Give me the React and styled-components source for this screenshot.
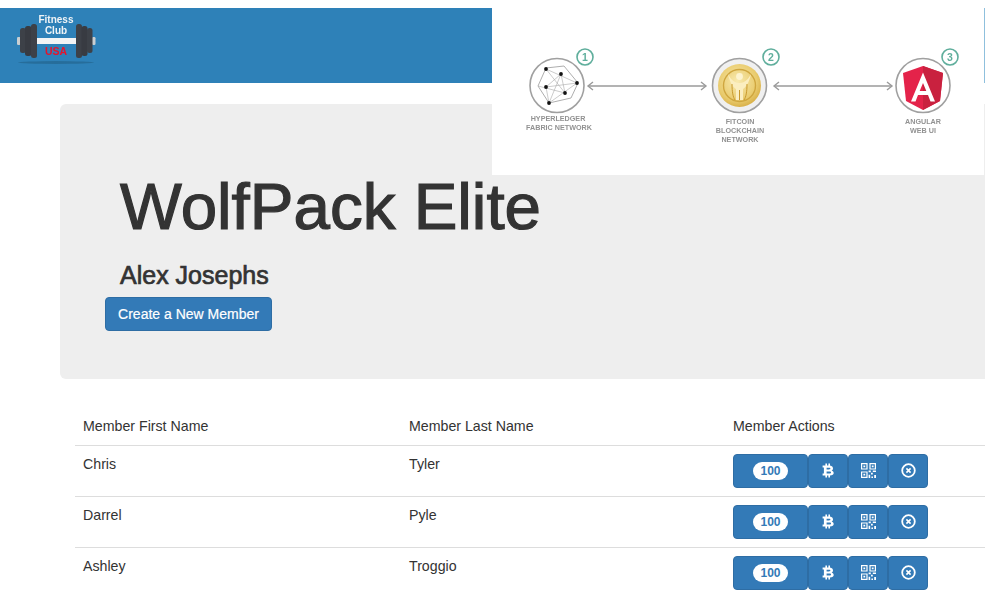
import React from "react";
import styled, { createGlobalStyle } from "styled-components";

const GlobalStyle = createGlobalStyle`
  html, body {
    margin: 0;
    padding: 0;
    background: #fff;
    overflow: hidden;
  }
  body {
    font-family: "Liberation Sans", Arial, sans-serif;
    color: #333;
  }
`;

const Page = styled.div`
  position: relative;
  width: 985px;
  height: 606px;
  overflow: hidden;
  padding-top: 8px;
  box-sizing: border-box;
`;

const Navbar = styled.div`
  height: 75px;
  background: #2e81b8;
  display: flex;
  align-items: center;
`;

const Jumbotron = styled.div`
  margin: 21px 0 0 60px;
  height: 275px;
  background: #eee;
  border-radius: 6px 0 0 6px;
  box-sizing: border-box;
  padding: 68px 0 0 45px;
`;

const Title = styled.h1`
  margin: 0 0 0 15px;
  font-size: 65.5px;
  line-height: 70px;
  font-weight: 400;
  color: #333;
  -webkit-text-stroke: 1.2px #333;
`;

const Subtitle = styled.h3`
  margin: 18px 0 0 15px;
  font-size: 25px;
  line-height: 30px;
  font-weight: 400;
  color: #333;
  -webkit-text-stroke: 0.7px #333;
`;

const PrimaryButton = styled.button`
  display: block;
  margin-top: 7px;
  width: 167px;
  height: 34px;
  padding: 0;
  border: 1px solid #2e6da4;
  border-radius: 4px;
  background: #337ab7;
  color: #fff;
  font-family: inherit;
  font-size: 14px;
  -webkit-text-stroke: 0.2px #fff;
`;

const Table = styled.table`
  margin: 29px 0 0 75px;
  width: 910px;
  border-collapse: collapse;
  table-layout: fixed;
  font-size: 14.2px;
  color: #333;
`;

const HeadCell = styled.th`
  height: 37px;
  padding: 0 8px;
  box-sizing: border-box;
  text-align: left;
  font-weight: 400;
  border-bottom: 1px solid #ddd;
  vertical-align: middle;
  width: ${(p) => p.$w}px;
`;

const Row = styled.tr`
  &:not(:last-child) td {
    border-bottom: 1px solid #ddd;
  }
`;

const Cell = styled.td`
  height: 51px;
  padding: 8px 8px 0;
  box-sizing: border-box;
  vertical-align: top;
  line-height: 20px;
`;

const ActionGroup = styled.div`
  display: flex;
  height: 34px;
`;

const ActionButton = styled.button`
  width: ${(p) => p.$w}px;
  height: 34px;
  padding: 0;
  box-sizing: border-box;
  border: 1px solid #2e6da4;
  border-radius: 4px;
  background: #337ab7;
  color: #fff;
  display: flex;
  align-items: center;
  justify-content: center;
  font-family: inherit;
`;

const Badge = styled.span`
  width: 35px;
  height: 18px;
  border-radius: 9px;
  background: #fff;
  color: #337ab7;
  font-size: 12px;
  font-weight: 700;
  line-height: 18px;
  text-align: center;
`;

const DiagramPanel = styled.div`
  position: absolute;
  left: 492px;
  top: 0;
  width: 492px;
  height: 175px;
  background: #fff;
`;

const Sliver = styled.div`
  position: absolute;
  left: 984px;
  top: 8px;
  width: 1px;
  height: 75px;
  background: #8fc0dd;
`;

const Soft = styled.svg`
  display: block;
  filter: blur(0.35px);
`;

const members = [
  { first: "Chris", last: "Tyler" },
  { first: "Darrel", last: "Pyle" },
  { first: "Ashley", last: "Troggio" },
];

function BtcIcon() {
  return (
    <svg width="12" height="15" viewBox="0 0 12 15">
      <path
        fill="#fff"
        fillRule="evenodd"
        d="M.6 2.5H3.4V.4H5V2.5H6.4V.4H8V2.6C10 3 11 4.2 11 5.5C11 6.6 10.4 7.2 9.6 7.5C10.9 7.9 11.7 8.8 11.7 10C11.7 11.7 10.4 12.4 8 12.5V14.6H6.4V12.5H5V14.6H3.4V12.5H.6V10.5H1.9V4.5H.6ZM4.6 4.7V6.5H7.2C8 6.5 8.4 6.1 8.4 5.6C8.4 5.1 8 4.7 7.2 4.7ZM4.6 8.5V10.4H7.6C8.5 10.4 9 10 9 9.45C9 8.9 8.5 8.5 7.6 8.5Z"
      />
    </svg>
  );
}

function QrIcon() {
  return (
    <svg width="15" height="15" viewBox="0 0 15 15" fill="none">
      <path d="M.6.6h5.4v5.4H.6zM9 .6h5.4v5.4H9zM.6 9h5.4v5.4H.6z" stroke="#fff" strokeWidth="1.2" />
      <path d="M2.4 2.4h1.8v1.8H2.4zM10.8 2.4h1.8v1.8h-1.8zM2.4 10.8h1.8v1.8H2.4zM7.6 7.6h2.2v1.6H7.6zM11.8 7.6H15v1.4h-3.2zM10 9.8h1.8v1.8H10zM7.6 11.8h1.6V15H7.6zM13.2 12h1.8v3h-1.8zM10.4 13.4h1.6V15h-1.6z" fill="#fff" />
    </svg>
  );
}

function CloseIcon() {
  return (
    <svg width="15" height="15" viewBox="0 0 15 15" fill="none" stroke="#fff">
      <circle cx="7.5" cy="7.5" r="6.3" strokeWidth="1.8" />
      <path d="M5.4 5.4l4.2 4.2M9.6 5.4l-4.2 4.2" strokeWidth="1.6" />
    </svg>
  );
}

function Logo() {
  const fs = { fontFamily: "Liberation Sans, Arial, sans-serif", textAnchor: "middle" };
  return (
    <Soft width="120" height="75" viewBox="0 0 120 75">
      <ellipse cx="56" cy="54.5" rx="38" ry="1.4" fill="#24658f" opacity="0.7" />
      <rect x="17" y="29" width="3.5" height="8" rx="1.2" fill="#c9ced1" />
      <rect x="92" y="29" width="3.5" height="8" rx="1.2" fill="#c9ced1" />
      <rect x="20" y="20" width="6" height="25" rx="2.5" fill="#3d4148" />
      <rect x="25" y="18" width="6.5" height="30" rx="2.5" fill="#383b42" />
      <rect x="31" y="16" width="6" height="34" rx="2.5" fill="#3d4148" />
      <rect x="76" y="16" width="6" height="34" rx="2.5" fill="#3d4148" />
      <rect x="81.5" y="18" width="6" height="30" rx="2.5" fill="#383b42" />
      <rect x="87" y="20" width="5.5" height="25" rx="2.5" fill="#3d4148" />
      <rect x="37" y="30" width="39" height="6" fill="#f2f4f5" />
      <text x="56" y="15" fontSize="10" fontWeight="700" fill="#eef3f6" style={fs}>Fitness</text>
      <text x="56" y="26" fontSize="10" fontWeight="700" fill="#eef3f6" style={fs}>Club</text>
      <text x="56" y="46.5" fontSize="10.5" fontWeight="700" fill="#e4142c" style={fs}>USA</text>
    </Soft>
  );
}

const Step = ({ x, y, n }) => (
  <g>
    <circle cx={x} cy={y} r="8" fill="#fff" stroke="#5fae9c" strokeWidth="1.6" />
    <text x={x} y={y + 3.8} fontSize="10.5" fontWeight="700" fontFamily="Liberation Sans, Arial, sans-serif" textAnchor="middle" fill="#5fae9c">
      {n}
    </text>
  </g>
);

const Arrow = ({ x1, x2, y }) => (
  <g stroke="#9a9a9a" strokeWidth="1.4" fill="none">
    <path d={`M${x1} ${y}H${x2}`} />
    <path d={`M${x1 + 5} ${y - 4}L${x1} ${y}L${x1 + 5} ${y + 4}`} />
    <path d={`M${x2 - 5} ${y - 4}L${x2} ${y}L${x2 - 5} ${y + 4}`} />
  </g>
);

const Label = ({ x, y, children }) => (
  <text x={x} y={y} fontSize="7.2" fontWeight="700" fontFamily="Liberation Sans, Arial, sans-serif" textAnchor="middle" fill="#929292">
    {children}
  </text>
);

function Diagram() {
  const dots = [[54, 69], [69, 74], [85, 83], [54, 87], [73, 93], [57, 103]];
  const hex = "M54 68 L72 66 L86 83 L79 98 L57 103 L46 86 Z";
  return (
    <Soft width="492" height="175" viewBox="0 0 492 175">
      <defs>
        <radialGradient id="coin" cx="45%" cy="40%" r="65%">
          <stop offset="0" stopColor="#f8e9ae" />
          <stop offset="0.7" stopColor="#e9cb6d" />
          <stop offset="1" stopColor="#d4a93f" />
        </radialGradient>
      </defs>
      {/* fabric */}
      <circle cx="65" cy="85.5" r="27" fill="#fff" stroke="#a0a0a0" strokeWidth="1.6" />
      <path d={hex} fill="none" stroke="#999" strokeWidth="0.8" />
      <path d="M54 69L85 83L57 103L54 87L69 74L73 93L46 86M54 69L73 93M69 74L57 103M54 87L85 83" fill="none" stroke="#aaa" strokeWidth="0.6" />
      {dots.map(([x, y]) => (
        <circle key={`${x}-${y}`} cx={x} cy={y} r="1.9" fill="#111" />
      ))}
      <Step x={93} y={57} n="1" />
      <Arrow x1={96} x2={214} y={86} />
      <Label x={66} y={121}>HYPERLEDGER</Label>
      <Label x={67} y={130}>FABRIC NETWORK</Label>

      {/* fitcoin */}
      <circle cx="247.5" cy="85.5" r="27" fill="#f0f0f0" stroke="#a0a0a0" strokeWidth="1.6" />
      <circle cx="247.5" cy="85.5" r="21.5" fill="url(#coin)" />
      <circle cx="247.5" cy="85.5" r="16" fill="none" stroke="#cfa63f" strokeWidth="1.4" />
      <circle cx="247.5" cy="76.5" r="3.4" fill="#fdf3cf" />
      <path d="M236 74C238 83 241 87 244 89V100H251V89C254 87 257 83 259 74C256 80 252 83 247.5 83C243 83 239 80 236 74Z" fill="#fbeec0" />
      <path d="M240 84C240 92 241 97 243 100M255 84C255 92 254 97 252 100M247.5 90V100" fill="none" stroke="#c99a2e" strokeWidth="1" />
      <Step x={279} y={57} n="2" />
      <Arrow x1={282} x2={400} y={86} />
      <Label x={248} y={124}>FITCOIN</Label>
      <Label x={248} y={133}>BLOCKCHAIN</Label>
      <Label x={248} y={142}>NETWORK</Label>

      {/* angular */}
      <circle cx="431" cy="85.5" r="27" fill="#fff" stroke="#a0a0a0" strokeWidth="1.6" />
      <path d="M431 66L411 73L414 101L431 110L448 101L451 73Z" fill="#e4234a" />
      <path d="M431 66V110L448 101L451 73Z" fill="#c9213f" />
      <path d="M431 72.5L419 101.5H423.5L426 95H436L438.5 101.5H443ZM427.7 91L431 83L434.3 91Z" fill="#fff" fillRule="evenodd" />
      <Step x={458} y={57} n="3" />
      <Label x={431} y={124}>ANGULAR</Label>
      <Label x={431} y={133}>WEB UI</Label>
    </Soft>
  );
}

export default function App() {
  return (
    <Page>
      <GlobalStyle />
      <Navbar>
        <Logo />
      </Navbar>
      <Jumbotron>
        <Title>WolfPack Elite</Title>
        <Subtitle>Alex Josephs</Subtitle>
        <PrimaryButton>Create a New Member</PrimaryButton>
      </Jumbotron>
      <Table>
        <thead>
          <tr>
            <HeadCell $w={326}>Member First Name</HeadCell>
            <HeadCell $w={324}>Member Last Name</HeadCell>
            <HeadCell>Member Actions</HeadCell>
          </tr>
        </thead>
        <tbody>
          {members.map((m) => (
            <Row key={m.first}>
              <Cell>{m.first}</Cell>
              <Cell>{m.last}</Cell>
              <Cell>
                <ActionGroup>
                  <ActionButton $w={75}>
                    <Badge>100</Badge>
                  </ActionButton>
                  <ActionButton $w={40}>
                    <BtcIcon />
                  </ActionButton>
                  <ActionButton $w={40}>
                    <QrIcon />
                  </ActionButton>
                  <ActionButton $w={40}>
                    <CloseIcon />
                  </ActionButton>
                </ActionGroup>
              </Cell>
            </Row>
          ))}
        </tbody>
      </Table>
      <DiagramPanel>
        <Diagram />
      </DiagramPanel>
      <Sliver />
    </Page>
  );
}
